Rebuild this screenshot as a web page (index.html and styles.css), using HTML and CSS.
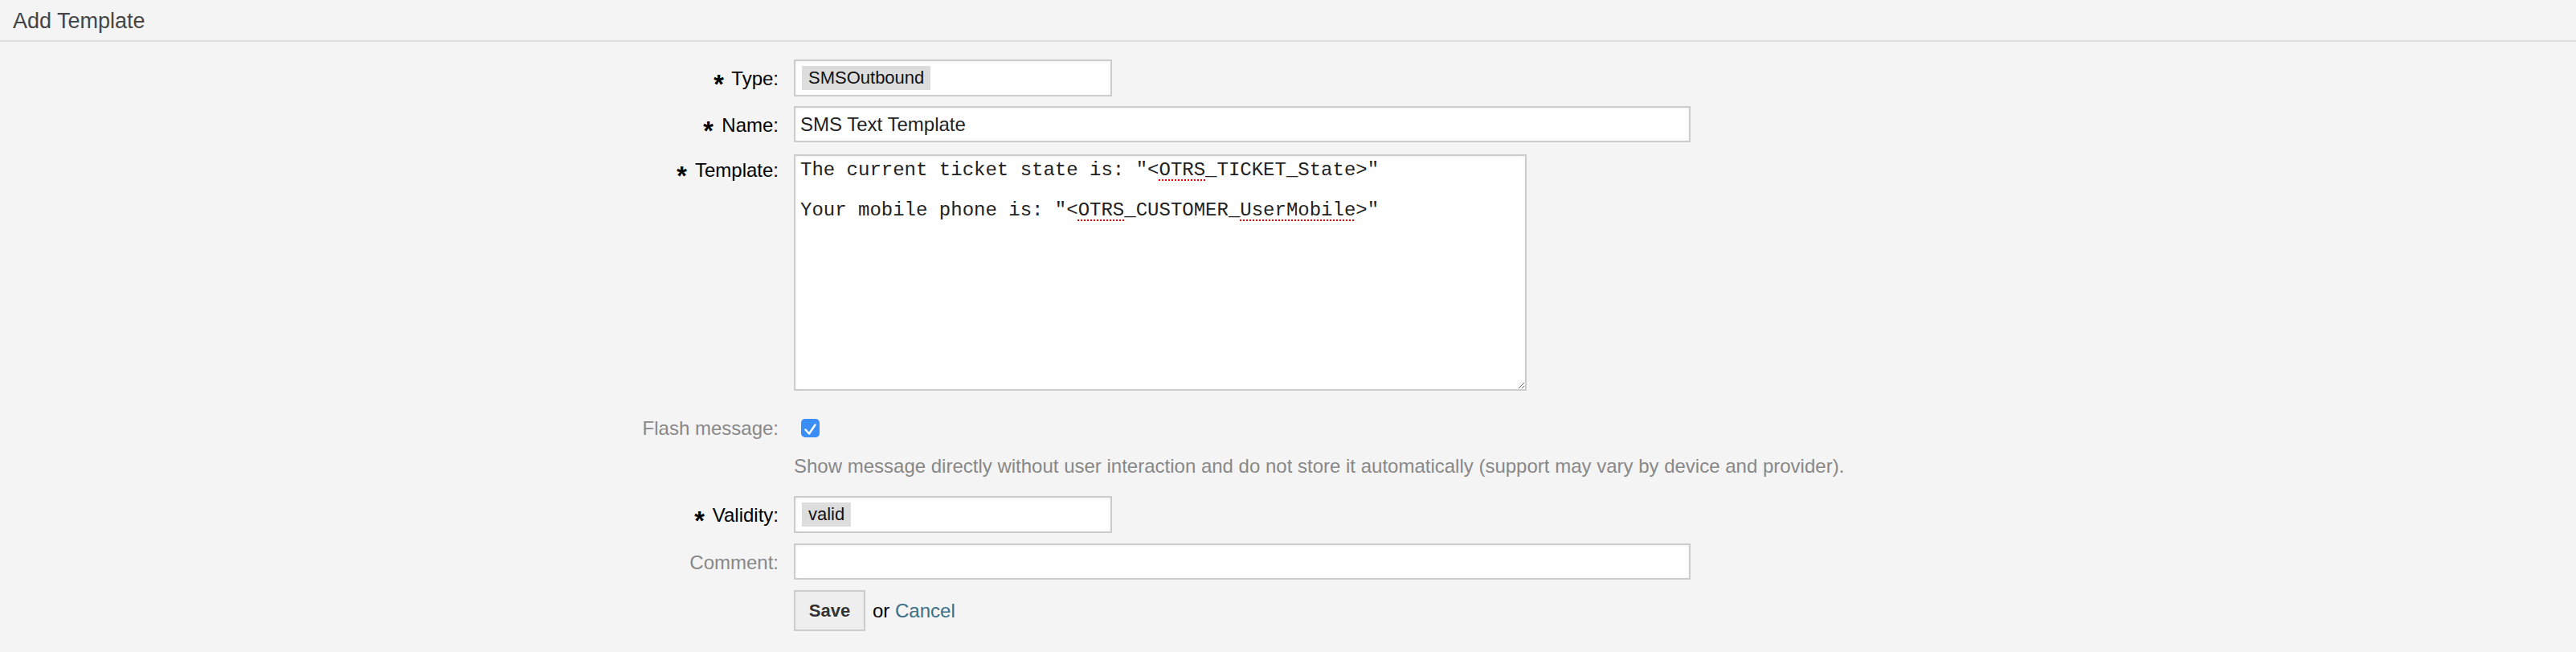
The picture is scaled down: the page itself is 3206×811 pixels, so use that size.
FILE: index.html
```html
<!DOCTYPE html>
<html lang="en">
<head>
<meta charset="utf-8">
<title>Add Template</title>
<link rel="stylesheet" href="styles.css">
</head>
<body>
<div class="header"><h1 class="title">Add Template</h1></div>
<form class="form">
  <div class="row row-type">
    <label class="label"><span class="marker">*</span> Type:</label>
    <div class="select"><span class="tag">SMSOutbound</span></div>
  </div>
  <div class="row row-name">
    <label class="label"><span class="marker">*</span> Name:</label>
    <input class="input" type="text" value="SMS Text Template">
  </div>
  <div class="row row-template">
    <label class="label"><span class="marker">*</span> Template:</label>
    <div class="textarea">The current ticket state is: "&lt;<span class="sp">OTRS</span>_TICKET_State&gt;"

Your mobile phone is: "&lt;<span class="sp">OTRS</span>_CUSTOMER_<span class="sp">UserMobile</span>&gt;"</div>
  </div>
  <div class="row row-flash">
    <label class="label optional">Flash message:</label>
    <span class="checkbox"><svg width="23" height="23" viewBox="0 0 23 23"><rect width="23" height="23" rx="5" fill="#3b8ef5"/><path d="M5.5 13.5 L10 18.5 L17.5 7.5" stroke="#fff" stroke-width="2.4" fill="none" stroke-linecap="round" stroke-linejoin="round"/></svg></span>
  </div>
  <div class="row row-help">
    <p class="help">Show message directly without user interaction and do not store it automatically (support may vary by device and provider).</p>
  </div>
  <div class="row row-validity">
    <label class="label"><span class="marker">*</span> Validity:</label>
    <div class="select"><span class="tag">valid</span></div>
  </div>
  <div class="row row-comment">
    <label class="label optional">Comment:</label>
    <input class="input" type="text" value="">
  </div>
  <div class="row row-actions">
    <button class="btn" type="button">Save</button>
    <span class="or">or <a class="link" href="#">Cancel</a></span>
  </div>
</form>
</body>
</html>
```
FILE: styles.css
```css
html, body {
  margin: 0;
  background: #f4f4f4;
  font-family: "Liberation Sans", Arial, sans-serif;
  font-size: 24px;
  color: #000;
}

.header {
  height: 50px;
  border-bottom: 2px solid #dcdcdc;
  padding: 0 16px;
}

.title {
  margin: 0;
  padding-top: 13px;
  font-size: 27px;
  line-height: 26px;
  font-weight: normal;
  color: #454545;
}

.form {
  padding-top: 22px;
}

.row {
  display: flex;
  align-items: center;
  gap: 19px;
}

.label {
  flex: none;
  width: 969px;
  text-align: right;
  line-height: 26px;
  padding-top: 2px;
}

.label.optional {
  color: #888;
}

.marker {
  display: inline-block;
  font-weight: bold;
  margin-right: 5px;
  transform: translateY(7px) scale(1.35);
}

.row-name { margin-top: 12px; }
.row-template { margin-top: 15px; align-items: flex-start; }
.row-template .label { padding-top: 7px; }
.row-flash { margin-top: 32px; }
.row-help { margin-top: 21px; padding-left: 988px; }
.row-validity { margin-top: 24px; }
.row-comment { margin-top: 13px; }
.row-actions { margin-top: 13px; padding-left: 988px; gap: 9px; }

.select {
  box-sizing: border-box;
  width: 396px;
  height: 46px;
  border: 2px solid #ccc;
  background: #fff;
  padding: 6px 8px;
  box-shadow: inset 0 1px 4px rgba(0, 0, 0, 0.06);
}

.tag {
  display: inline-block;
  height: 30px;
  line-height: 30px;
  padding: 0 8px;
  background: #ddd;
  color: #111;
  font-size: 22px;
}

.input {
  box-sizing: border-box;
  width: 1116px;
  height: 45px;
  border: 2px solid #ccc;
  background: #fff;
  padding: 0 6px;
  margin: 0;
  font-family: "Liberation Sans", Arial, sans-serif;
  font-size: 24px;
  color: #222;
  outline: none;
  box-shadow: inset 0 1px 4px rgba(0, 0, 0, 0.06);
}

.textarea {
  box-sizing: border-box;
  width: 912px;
  height: 294px;
  border: 2px solid #ccc;
  background: #fff;
  padding: 5px 6px;
  font-family: "Liberation Mono", "Courier New", monospace;
  font-size: 24px;
  line-height: 25px;
  color: #222;
  white-space: pre;
  resize: both;
  overflow: auto;
  box-shadow: inset 0 1px 4px rgba(0, 0, 0, 0.06);
}

.sp {
  text-decoration: underline dotted #e00;
  text-decoration-thickness: 2px;
  text-underline-offset: 5px;
}

.checkbox {
  display: inline-flex;
  width: 23px;
  height: 23px;
  margin-left: 9px;
}

.help {
  margin: 0;
  line-height: 26px;
  color: #888;
}

.btn {
  box-sizing: border-box;
  width: 89px;
  height: 51px;
  border: 2px solid #ccc;
  background: #eee;
  padding: 0;
  font-family: "Liberation Sans", Arial, sans-serif;
  font-size: 22px;
  font-weight: bold;
  color: #333;
  text-shadow: 0 1px 0 #fff;
}

.or {
  color: #000;
}

.link {
  color: #3a6f88;
  text-decoration: none;
}
```
